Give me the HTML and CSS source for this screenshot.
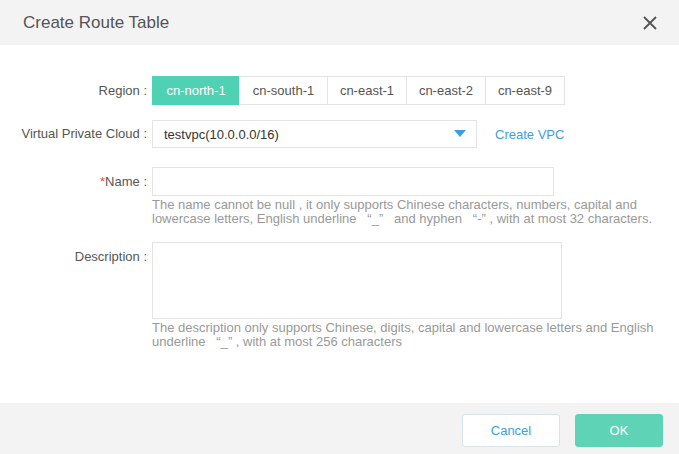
FILE: index.html
```html
<!DOCTYPE html>
<html>
<head>
<meta charset="utf-8">
<link rel="stylesheet" href="styles.css">
</head>
<body>
<div class="dialog">
  <div class="header">
    <div class="title">Create Route Table</div>
    <svg class="close" width="14" height="14" viewBox="0 0 14 14"><path d="M1 1L13 13M13 1L1 13" stroke="#555" stroke-width="1.8" fill="none"/></svg>
  </div>
  <div class="body">
    <div class="row row-region">
      <div class="label">Region :</div>
      <div class="control">
        <div class="tabs">
          <div class="tab active">cn-north-1</div>
          <div class="tab">cn-south-1</div>
          <div class="tab">cn-east-1</div>
          <div class="tab">cn-east-2</div>
          <div class="tab">cn-east-9</div>
        </div>
      </div>
    </div>
    <div class="row row-vpc">
      <div class="label">Virtual Private Cloud :</div>
      <div class="control inline">
        <div class="select">
          <span>testvpc(10.0.0.0/16)</span>
          <svg class="caret" width="12" height="7" viewBox="0 0 12 7"><path d="M0 0H12L6 7Z" fill="#3a9fe8"/></svg>
        </div>
        <a class="link">Create VPC</a>
      </div>
    </div>
    <div class="row row-name">
      <div class="label"><span class="req">*</span>Name :</div>
      <div class="control">
        <div class="input"></div>
        <div class="hint">The name cannot be null , it only supports Chinese characters, numbers, capital and<br>lowercase letters, English underline &nbsp;&nbsp;“_” &nbsp;&nbsp;and hyphen &nbsp;&nbsp;“-” , with at most 32 characters.</div>
      </div>
    </div>
    <div class="row row-desc">
      <div class="label">Description :</div>
      <div class="control">
        <div class="textarea"></div>
        <div class="hint">The description only supports Chinese, digits, capital and lowercase letters and English<br>underline &nbsp;&nbsp;“_” , with at most 256 characters</div>
      </div>
    </div>
  </div>
  <div class="footer">
    <button class="btn cancel">Cancel</button>
    <button class="btn ok">OK</button>
  </div>
</div>
</body>
</html>
```

FILE: styles.css
```css
* { box-sizing: border-box; }
html, body { margin: 0; padding: 0; }
body {
  font-family: "Liberation Sans", Arial, sans-serif;
  color: #555;
  background: #fff;
}
.dialog {
  width: 679px;
  height: 454px;
  display: flex;
  flex-direction: column;
}
.header {
  height: 45px;
  background: #f3f3f3;
  display: flex;
  align-items: center;
  justify-content: space-between;
  padding: 0 22px 0 23px;
}
.title {
  font-size: 17px;
  color: #555;
}
.close { display: block; }
.body {
  flex: 1;
  padding-top: 31px;
}
.row {
  display: flex;
}
.label {
  width: 152px;
  padding-right: 5px;
  text-align: right;
  font-size: 13px;
  color: #555;
  flex-shrink: 0;
}
.req { color: #e84c3d; }
.row-region .label { line-height: 29px; }
.tabs { display: flex; }
.tab {
  height: 29px;
  line-height: 27px;
  border: 1px solid #e4e4e4;
  margin-left: -1px;
  font-size: 13px;
  color: #555;
  text-align: center;
  width: 80px;
}
.tab:first-child { margin-left: 0; }
.tab.active {
  background: #4fd1b4;
  border-color: #4fd1b4;
  color: #fff;
  width: 88px;
}
.tab:nth-child(2) { width: 89px; }
.row-vpc { margin-top: 15px; }
.row-vpc .label { line-height: 28px; }
.inline { display: flex; align-items: center; }
.select {
  width: 325px;
  height: 28px;
  border: 1px solid #e4e4e4;
  display: flex;
  align-items: center;
  justify-content: space-between;
  padding: 0 10px 0 11px;
  font-size: 13px;
  color: #333;
}
.caret { display: block; margin-top: -2px; }
.link {
  margin-left: 18px;
  font-size: 13px;
  color: #3a9fe8;
}
.row-name { margin-top: 19px; }
.row-name .label { line-height: 29px; }
.input {
  width: 402px;
  height: 29px;
  border: 1px solid #e4e4e4;
}
.hint {
  font-size: 13px;
  line-height: 14px;
  color: #999;
  margin-top: 2px;
  white-space: nowrap;
}
.row-desc { margin-top: 16px; }
.row-desc .label { padding-top: 7px; }
.textarea {
  width: 410px;
  height: 77px;
  border: 1px solid #e4e4e4;
}
.footer {
  height: 51px;
  background: #f3f3f3;
  display: flex;
  align-items: flex-start;
  justify-content: flex-end;
  padding: 11px 16px 0 0;
  gap: 15px;
}
.btn {
  height: 33px;
  border-radius: 3px;
  font-family: "Liberation Sans", Arial, sans-serif;
  font-size: 13px;
  padding: 0;
}
.cancel {
  width: 98px;
  background: #fff;
  border: 1px solid #d8e3ec;
  color: #3a9fe8;
}
.ok {
  width: 88px;
  background: #5fd3b6;
  border: 1px solid #5fd3b6;
  color: #fff;
}
```
